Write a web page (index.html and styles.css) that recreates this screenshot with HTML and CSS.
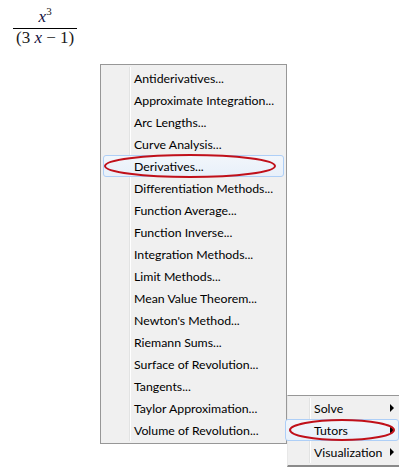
FILE: index.html
```html
<!DOCTYPE html>
<html>
<head>
<meta charset="utf-8">
<link rel="stylesheet" href="styles.css">
</head>
<body>
<div class="doc">
  <div class="frac">
    <div class="num"><i>x</i><sup>3</sup></div>
    <div class="den">(3 <i>x</i> − 1)</div>
  </div>
</div>

<div class="menu main-menu">
  <div class="gutter"></div>
  <div class="item">Antiderivatives...</div>
  <div class="item">Approximate Integration...</div>
  <div class="item">Arc Lengths...</div>
  <div class="item">Curve Analysis...</div>
  <div class="item hot">Derivatives...</div>
  <div class="item">Differentiation Methods...</div>
  <div class="item">Function Average...</div>
  <div class="item">Function Inverse...</div>
  <div class="item">Integration Methods...</div>
  <div class="item">Limit Methods...</div>
  <div class="item">Mean Value Theorem...</div>
  <div class="item">Newton's Method...</div>
  <div class="item">Riemann Sums...</div>
  <div class="item">Surface of Revolution...</div>
  <div class="item">Tangents...</div>
  <div class="item">Taylor Approximation...</div>
  <div class="item">Volume of Revolution...</div>
</div>

<div class="menu sub-menu">
  <div class="gutter"></div>
  <div class="item">Solve<span class="arrow"></span></div>
  <div class="item hot">Tutors<span class="arrow"></span></div>
  <div class="item">Visualization<span class="arrow"></span></div>
</div>

<svg class="ring ring-deriv" width="180" height="26" viewBox="0 0 180 26"><ellipse cx="88" cy="13" rx="85" ry="11" fill="none" stroke="#c0101a" stroke-width="2"/></svg>
<svg class="ring ring-tutor" width="110" height="26" viewBox="0 0 110 26"><ellipse cx="55" cy="13" rx="52" ry="10" fill="none" stroke="#c0101a" stroke-width="2"/></svg>
</body>
</html>
```
FILE: styles.css
```css
html, body {
  margin: 0;
  padding: 0;
  background: #ffffff;
  width: 399px;
  height: 470px;
  overflow: hidden;
  position: relative;
}

.doc {
  padding: 2px 0 0 13px;
}

.frac {
  display: inline-flex;
  flex-direction: column;
  align-items: center;
  font-family: "Liberation Serif", serif;
  font-size: 17px;
  color: #1a1a1a;
}

.frac i {
  color: #101040;
}

.num {
  line-height: 18px;
  padding: 0 2px 2px 2px;
}

.num sup {
  font-size: 11px;
  vertical-align: 7px;
}

.den {
  border-top: 1px solid #000;
  padding: 0 3px;
  line-height: 18px;
}

.menu {
  position: absolute;
  background: #f0f0f0;
  border: 1px solid #979797;
  font-family: Lato, "Noto Sans", sans-serif;
  font-size: 12.3px;
  color: #000;
  box-sizing: border-box;
}

.main-menu {
  left: 100px;
  top: 64px;
  width: 187px;
  padding: 2px;
}

.sub-menu {
  left: 287px;
  top: 395px;
  width: 115px;
  padding: 1px 2px 2px 2px;
  border-left-color: #e8e8e8;
  border-bottom: 2px solid #8a8a8a;
}

.gutter {
  position: absolute;
  top: 2px;
  bottom: 2px;
  width: 1px;
  background: #e2e3e3;
  border-right: 1px solid #ffffff;
}

.main-menu .gutter { left: 28px; }
.sub-menu .gutter { left: 21px; }

.item {
  position: relative;
  height: 22px;
  line-height: 21px;
  white-space: nowrap;
  box-sizing: border-box;
  border: 1px solid transparent;
  border-radius: 3px;
}

.main-menu .item { padding-left: 30px; }
.sub-menu .item { padding-left: 23px; }

.item.hot {
  border-color: #aecff7;
  background: linear-gradient(#f2f6fb, #e8f0fa);
}

.sub-menu .item.hot {
  margin-left: -5px;
  padding-left: 28px;
}

.arrow {
  position: absolute;
  right: 4px;
  top: 6px;
  width: 0;
  height: 0;
  border-top: 4px solid transparent;
  border-bottom: 4px solid transparent;
  border-left: 4px solid #000;
}

.ring {
  position: absolute;
}

.ring-deriv {
  left: 102px;
  top: 153px;
}

.ring-tutor {
  left: 287px;
  top: 417px;
}
```
